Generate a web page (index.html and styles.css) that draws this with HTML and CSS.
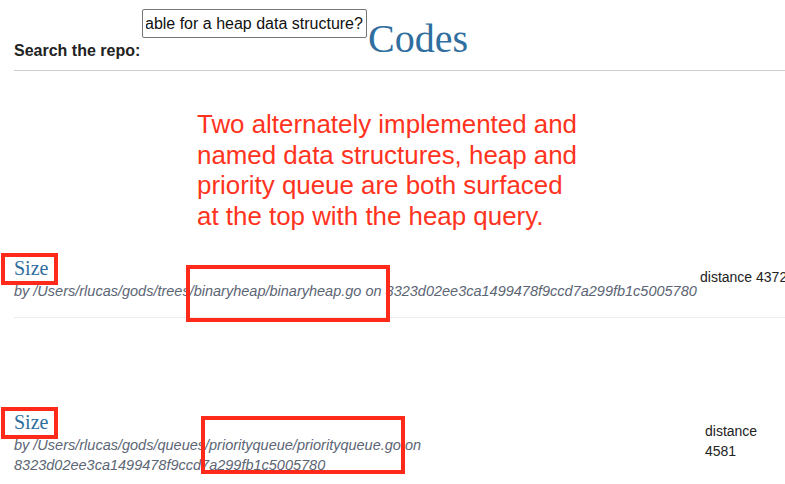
FILE: index.html
```html
<!DOCTYPE html>
<html lang="en">
<head>
<meta charset="utf-8">
<title>Codes</title>
<link rel="stylesheet" href="styles.css">
</head>
<body>
<div class="page">
  <header class="search-bar">
    <label class="search-label" for="q">Search the repo:</label>
    <input class="search-input" id="q" type="text" value="What is a variable name suitable for a heap data structure?">
    <h1 class="brand">Codes</h1>
  </header>

  <p class="note">Two alternately implemented and<br>named data structures, heap and<br>priority queue are both surfaced<br>at the top with the heap query.</p>

  <div class="result result--first">
    <div class="result-main result-main--wide">
      <h3 class="result-title">Size</h3>
      <p class="result-path">by /Users/rlucas/gods/trees/binaryheap/binaryheap.go on 8323d02ee3ca1499478f9ccd7a299fb1c5005780</p>
    </div>
    <div class="result-distance result-distance--nowrap">distance 4372</div>
  </div>

  <div class="result result--next">
    <div class="result-main result-main--wrap">
      <h3 class="result-title">Size</h3>
      <p class="result-path">by /Users/rlucas/gods/queues/priorityqueue/priorityqueue.go on 8323d02ee3ca1499478f9ccd7a299fb1c5005780</p>
    </div>
    <div class="result-distance result-distance--narrow">distance 4581</div>
  </div>

  <span class="mark mark--title1"></span>
  <span class="mark mark--path1"></span>
  <span class="mark mark--title2"></span>
  <span class="mark mark--path2"></span>
</div>
<script src="script.js"></script>
</body>
</html>
```

FILE: styles.css
```css
html, body {
  margin: 0;
  padding: 0;
  overflow: hidden;
  background: #ffffff;
}

body {
  font-family: "Liberation Sans", Arial, sans-serif;
  color: #222222;
}

.page {
  position: relative;
  width: 820px;
  padding-left: 14px;
  box-sizing: border-box;
  min-height: 484px;
}

.search-bar {
  display: flex;
  align-items: flex-start;
  padding-bottom: 7px;
  border-bottom: 1px solid #cccccc;
}

.search-label {
  margin-top: 42px;
  font-size: 16px;
  line-height: 18px;
  font-weight: bold;
  color: #222222;
  width: 128px;
}

.search-input {
  margin: 9px 0 0 0;
  width: 225px;
  height: 29px;
  box-sizing: border-box;
  padding: 1px 3px;
  border: 1px solid #767676;
  border-radius: 2px;
  font-family: "Liberation Sans", Arial, sans-serif;
  font-size: 16px;
  color: #111111;
  background: #ffffff;
  outline: none;
}

.brand {
  margin: 15px 0 0 1px;
  font-family: "Liberation Serif", "Times New Roman", serif;
  font-weight: normal;
  font-size: 40px;
  line-height: 48px;
  color: #2f6e9e;
}

.note {
  margin: 38px 0 0 183px;
  font-family: "Liberation Sans", Arial, sans-serif;
  font-size: 25.9px;
  line-height: 30.5px;
  color: #ff3320;
}

.result {
  display: flex;
  align-items: center;
  padding-bottom: 16px;
  border-bottom: 1px solid #ececec;
}

.result--first {
  margin-top: 25px;
}

.result--next {
  margin-top: 92px;
  border-bottom: none;
}

.result-main--wide {
  flex: 0 0 686px;
}

.result-main--wrap {
  flex: 0 0 691px;
}

.result-title {
  margin: 0;
  font-family: "Liberation Serif", "Times New Roman", serif;
  font-weight: normal;
  font-size: 20px;
  line-height: 25px;
  color: #2f6e9e;
}

.result-path {
  margin: 0;
  font-style: italic;
  font-size: 14.5px;
  line-height: 20px;
  color: #5c6574;
}

.result-distance {
  font-size: 14px;
  line-height: 20px;
  color: #222222;
  margin-bottom: 4px;
}

.result-distance--nowrap {
  white-space: nowrap;
}

.result-distance--narrow {
  width: 62px;
}

.mark {
  position: absolute;
  border: 4px solid #ff2a1a;
  box-sizing: border-box;
}

.mark--title1 {
  left: 1px;
  top: 253px;
  width: 57px;
  height: 32px;
}

.mark--path1 {
  left: 186px;
  top: 265px;
  width: 204px;
  height: 57px;
}

.mark--title2 {
  left: 1px;
  top: 407px;
  width: 57px;
  height: 32px;
}

.mark--path2 {
  left: 201px;
  top: 416px;
  width: 204px;
  height: 58px;
}
```

FILE: script.js
```js
var q = document.getElementById('q');
if (q) {
  q.scrollLeft = q.scrollWidth;
}
```
